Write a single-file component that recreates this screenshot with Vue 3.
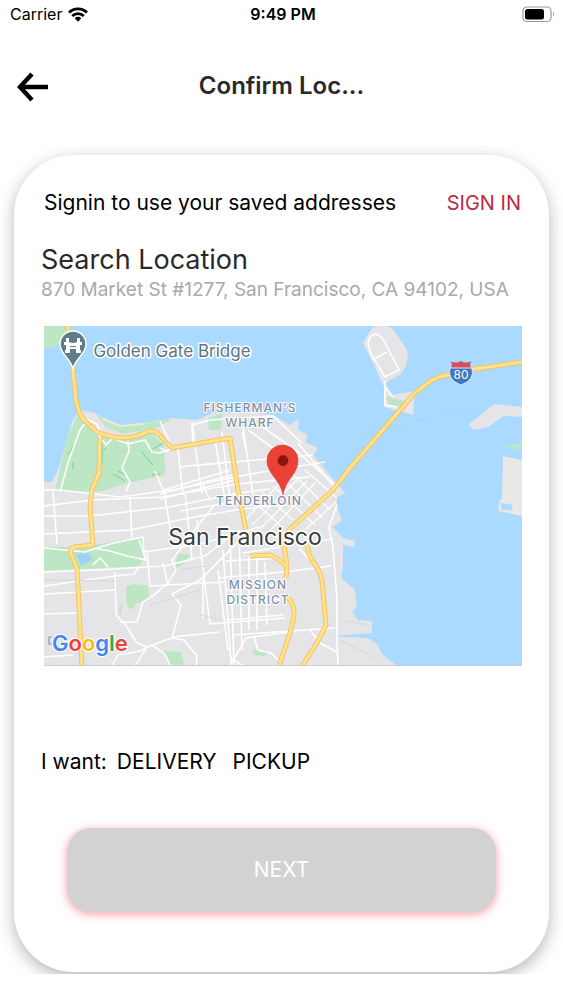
<template>
  <div class="screen">
    <div class="status-bar">
      <div class="carrier">
        <span>Carrier</span>
        <svg width="20" height="15" viewBox="0 0 20 15" aria-hidden="true">
          <g fill="none" stroke="#000" stroke-width="2.8">
            <path d="M1 5.6C6 .6 14 .6 19 5.6" />
            <path d="M4.2 9C7.6 5.7 12.4 5.7 15.8 9" />
          </g>
          <path d="M6.7 11.2C8.6 9.4 11.4 9.4 13.3 11.2L10 14.7Z" fill="#000" />
        </svg>
      </div>
      <span class="time">9:49 PM</span>
      <svg class="battery" width="34" height="17" viewBox="0 0 34 17" aria-hidden="true">
        <rect x="1" y="1" width="28" height="14.5" rx="4" fill="#fff" stroke="#999" stroke-width="1.2" />
        <rect x="3" y="3" width="19" height="10.5" rx="2.5" fill="#000" />
        <path d="M31 5.5Q33 8.2 31 11Z" fill="#999" />
      </svg>
    </div>

    <header class="header">
      <button class="back" type="button" aria-label="Back">
        <svg width="32" height="30" viewBox="0 0 32 30" aria-hidden="true">
          <path d="M15 2L3 15L15 28M3 15H31" fill="none" stroke="#000" stroke-width="4.4" />
        </svg>
      </button>
      <h1>Confirm Loc...</h1>
    </header>

    <main class="card-area">
      <section class="card">
        <div class="signin">
          <span>Signin to use your saved addresses</span>
          <button class="signin-btn" type="button">SIGN IN</button>
        </div>

        <h2>Search Location</h2>
        <p class="address">{{ address }}</p>

        <svg class="map" viewBox="44 326 478 340" role="img" aria-label="Map of San Francisco">
          <rect x="44" y="326" width="478" height="340" fill="#aadaff" />
          <!-- land -->
          <g fill="#e5e5e7">
            <path d="M44 482L52 482L59 467L66 442L73 420L79 410L95 413L120 426L150 422L173 418L197 420L210 414L223 413L250 412L273 415L290 425L299 419L298 430L308 435L305 442L318 448L313 455L325 469L337 483L345 493L337 497L337 507L342 520L333 527L343 538L355 541L354 547L343 545L343 567L341 578L355 590L357 607L352 612L358 620L372 621L372 633L330 636L367 638L376 643L384 656L397 666H44Z" />
            <path d="M363 343L372 328Q382 322 393 329L407 350Q410 363 400 375L385 383L392 395L415 391L413 415L384 407L384 387L373 363Z" />
            <path d="M469 424L494 404L522 407V417L504 416L488 427L473 430Z" />
            <path d="M503 456L522 460V516L499 511Q497 505 502 498Z" fill="#e8e8e6" />
          </g>
          <path d="M500 503L511 504L513 510L502 510Z" fill="#aadaff" />
          <!-- parks -->
          <g fill="#bde6c4">
            <path d="M44 326H68Q66 348 44 348Z" />
            <path d="M79 411L97 430L123 438L150 431L164 446L165 475L128 483L99 492L55 491L66 442Z" />
            <path d="M96 414L120 426L160 421L173 418L159 427L150 429L123 434L105 426Z" />
            <path d="M208 418L223 413L220 430L209 430Z" />
            <path d="M44 547H73L93 545L142 537L145 551L140 566L44 571Z" />
            <path d="M126 586L134 584L148 586L149 599L143 601L136 604L134 608L128 609L126 600Z" />
            <path d="M178 553L191 555L181 566L174 570Z" />
            <path d="M119 607L123 602L120 618Z" />
            <path d="M162 651L181 652L184 664L172 666Z" />
            <path d="M252 649L267 652L265 656L254 655Z" />
            <path d="M386 396L408 402L401 407L389 405Z" />
            <path d="M505 446L522 444V448L514 450Z" />
          </g>
          <g fill="none" stroke="#7fcaa0" stroke-width="1">
            <path d="M74 446L67 455M73 462V469M102 443V463M141 451L153 465M113 474L125 481M118 471L126 475M153 449L163 443M106 448L101 452M152 475L160 474" />
          </g>
          <path d="M76 554L89 553L92 560L81 565Z" fill="#9bd2f7" />
          <path d="M103 419L120 426L144 424" fill="none" stroke="#f0ead0" stroke-width="2" />
          <path d="M350 436L408 424L450 413L478 407" fill="none" stroke="#b6d3e6" stroke-width="1" />

          <!-- streets -->
          <g fill="none" stroke="#fff" stroke-width="1.6">
            <path d="M44 490L60 490L120 497L172 490L225 479L262 472L325 462" />
            <path d="M44 506L92 500L162 497L237 484L310 477" />
            <path d="M44 516L90 516L170 507L239 493L270 489" />
            <path d="M44 534L130 530L200 516L242 509L280 505" />
            <path d="M160 494L232 475M160 499L235 480M164 490L230 470M180 467L235 461M180 511L240 501" />
            <path d="M160 421L172 448L193 444L192 425L210 420L273 416L302 443" />
            <path d="M178 448L183 495M192 422L202 494M222 432L230 500M243 427L253 495M248 430L292 462M215 440L225 500" />
            <path d="M130 497L132 540M53 492L57 544M164 490L172 540M185 492L192 560M203 485L210 500M200 465L313 455" />
            <path d="M160 448L168 452M155 471L163 490M128 441L129 451L122 468L130 482L126 492M98 434L106 445L113 438L128 444L145 440L152 452L160 453L173 448" />
            <path d="M60 492L68 463L80 430L88 420L97 424L100 433" />
            <path d="M242 432L246 450M263 427L295 450L325 476M298 443L337 490" />
            <path d="M44 548L85 552L110 544L143 537L144 552L200 544L260 527" />
            <path d="M93 565L100 558L108 567M44 572L95 570L165 566L205 556L230 536" />
            <path d="M44 586L115 576L134 574L138 568M44 594L115 590M44 614L78 613" />
            <path d="M115 572L116 615L125 624L137 643M120 622H137L143 602L154 595L168 583L176 570L172 560L202 520L215 505" />
            <path d="M147 550L150 586L225 582M163 563L168 586M139 540L146 560L127 556L110 551L93 548" />
            <path d="M44 657L73 655M112 666L118 655L140 651L152 645L172 638L181 605L172 594L200 580L245 535" />
            <path d="M137 643L147 647L135 666M152 645L165 654L170 665M172 638L184 640L197 656L196 666M173 637L220 632" />
            <path d="M197 520L210 624L285 618M203 580V618M218 570L228 650M230 535L234 666M239 530L242 650M249 556V630M257 558V630M265 562L267 625" />
            <path d="M218 578L283 572L331 566M225 561L280 558M225 590L280 584M226 604L280 599M228 620L283 615M232 635L335 628M243 553L280 547" />
            <path d="M223 550L231 664L246 638L290 632M254 636L258 650L271 653L278 660M231 658L243 666" />
            <path d="M310 630L320 643L337 652M338 666L337 642L337 600L333 548L329 527L337 505" />
            <path d="M333 539L307 542M299 548L316 567" />
            <path d="M369 348Q366 337 375 334Q381 334 386 345L399 370L385 377L371 354ZM372 360L387 352M385 381V405L397 407M386 388L393 397" />
          </g>
          <g fill="none" stroke="#fff" stroke-width="1.2">
            <path d="M245 520L285 478M252 525L300 477M260 529L307 481M269 532L315 483M298 523L329 492M306 529L336 502M290 532L325 497" />
            <path d="M252 500L280 525M262 492L293 520M273 486L315 525M284 480L323 518M294 475L330 510M305 470L337 498M313 463L337 487" />
          </g>
          <g fill="none" stroke="#d6d7db" stroke-width="1">
            <path d="M44 580L115 581M150 605L200 590M180 570L205 566M200 615L222 620M340 640L378 660M345 621L370 625M314 455L335 482" />
          </g>

          <!-- highways -->
          <g v-for="layer in highwayLayers" :key="layer.stroke" fill="none" :stroke="layer.stroke" :stroke-width="layer.width" stroke-linejoin="round">
            <path v-for="road in highways" :key="road" :d="road" />
          </g>

          <!-- place labels -->
          <g class="label area">
            <text x="250" y="412">FISHERMAN'S</text>
            <text x="250" y="427">WHARF</text>
            <text x="259" y="505">TENDERLOIN</text>
            <text x="258" y="589">MISSION</text>
            <text x="258" y="604">DISTRICT</text>
          </g>
          <text class="label bridge" x="172" y="357">Golden Gate Bridge</text>
          <text class="label city" x="245" y="545">San Francisco</text>

          <!-- bridge pin -->
          <path d="M73 369C71 359 60 354 60 344A13 13 0 0 1 86 344C86 354 75 359 73 369Z" fill="#607d86" stroke="#fff" stroke-width="1.4" />
          <path d="M65 353V350H66V345H64V342H66V338H69V342Q73 344 77 342V338H80V342H82V345H80V350H81V353H76V349H70V353ZM70 346V347H76V346Z" fill="#fff" fill-rule="evenodd" />

          <!-- interstate shield -->
          <path d="M451 368Q453 363 450 361Q456 364 461 361Q466 364 472 361Q469 363 471 368Z" fill="#cf5260" />
          <path d="M450 368H472Q475 380 461 385Q447 380 450 368Z" fill="#3f76bf" stroke="#fff" stroke-width=".8" />
          <text class="shield" x="461" y="379">80</text>

          <!-- location marker -->
          <path d="M283 495C281 480 267 474 267 460.500A15.500 15.500 0 0 1 298 460.500C298 474 285 480 283 495Z" fill="#ea4335" stroke="#d23c31" stroke-width=".6" />
          <circle cx="283" cy="460.500" r="5.400" fill="#8b1410" />

          <path d="M52 637H49V644H52" fill="none" stroke="#8c95a3" stroke-width="1.2" />
          <text class="brand" x="52" y="651">
            <tspan v-for="(l, i) in brand" :key="i" :fill="l.color">{{ l.char }}</tspan>
          </text>
          <path d="M44 665.500H522" stroke="#c9ced4" stroke-width="1" />
        </svg>

        <div class="options">
          <span>I want:</span>
          <button v-for="o in options" :key="o" type="button" :aria-pressed="selected === o" @click="selected = o">{{ o }}</button>
        </div>

        <button class="next" type="button">NEXT</button>
      </section>
    </main>
  </div>
</template>

<script setup>
import { ref } from 'vue'

const address = '870 Market St #1277, San Francisco, CA 94102, USA'
const options = ['DELIVERY', 'PICKUP']
const selected = ref('')

const highways = [
  'M67 326L73 345V370L76 400Q78 413 84 420L97 432Q112 438 123 438Q137 437 150 431Q158 431 163 439L172 448L230 438L238 490L246 530',
  'M100 437L99 473L92 489L90 507L93 545L74 547Q69 549 71 554L77 568L82 666',
  'M522 362L475 369L438 377Q426 383 413 395L350 468L333 490L290 529L281 541',
  'M250 556L270 555Q282 560 285 566',
  'M283 540L287 565L286 578M287 597Q295 604 294 617L290 633L279 666',
  'M307 545Q309 558 316 566Q323 576 323 592L326 625L317 643L302 666',
]

const highwayLayers = [
  { stroke: '#f0c469', width: 5 },
  { stroke: '#ffe28a', width: 3 },
]

const brand = [
  { char: 'G', color: '#4285f4' },
  { char: 'o', color: '#ea4335' },
  { char: 'o', color: '#fbbc05' },
  { char: 'g', color: '#4285f4' },
  { char: 'l', color: '#34a853' },
  { char: 'e', color: '#ea4335' },
]
</script>

<style>
body { margin: 0; background: #fff; }
</style>

<style scoped>
.screen { font-family: Inter, "Liberation Sans", sans-serif; color: #000; background: #fff; padding-bottom: 24px; }
button { border: 0; padding: 0; background: none; font: inherit; color: inherit; cursor: pointer; }
h1, h2, p { margin: 0; }
svg { display: block; }

.status-bar { display: grid; grid-template-columns: 1fr auto 1fr; align-items: center; height: 28px; padding: 0 7px 0 10px; font-size: 16px; }
.carrier { display: flex; align-items: center; gap: 6px; }
.time { font-weight: 600; }
.battery { justify-self: end; }

.header { display: grid; grid-template-columns: 1fr auto 1fr; align-items: center; padding: 42px 17px 0; }
.back { justify-self: start; padding-top: 2px; }
h1 { font-size: 24px; line-height: 32px; font-weight: 600; color: #29292c; }

.card-area { overflow: hidden; padding: 53px 14px 2px; }
.card { display: flex; flex-direction: column; border-radius: 60px; padding: 34px 27px 60px; background: #fff; box-shadow: 0 5px 16px rgba(60, 50, 60, 0.36); }
.signin { display: flex; justify-content: space-between; padding: 0 1px 0 3px; font-size: 21px; line-height: 28px; }
.signin > span { font-size: 21px; }
.signin-btn { font-size: 20px; color: #bb2b45; }
h2 { margin-top: 25px; font-size: 27px; line-height: 36px; font-weight: 400; color: #29292c; }
.address { font-size: 19px; line-height: 24px; color: #a9a9ab; }
.map { align-self: stretch; margin: 24px 0 0 3px; }

.label { text-anchor: middle; paint-order: stroke; stroke: #fff; stroke-linejoin: round; }
.area { font-size: 12px; font-weight: 500; letter-spacing: 1px; fill: #8090a6; stroke-width: 2px; }
.bridge { font-size: 17px; fill: #5c7687; stroke-width: 3px; }
.city { font-size: 23px; fill: #3c3c40; stroke-width: 3px; }
.shield { font-size: 12px; fill: #fff; text-anchor: middle; }
.brand { font-size: 22px; font-weight: 600; paint-order: stroke; stroke: #fff; stroke-width: 2px; }

.options { display: flex; gap: 16px; margin-top: 82px; font-size: 21px; line-height: 28px; }
.options span { margin-right: -6px; }
.next { margin: 52px 26px 0; padding: 28px 0; border-radius: 24px; background: #d3d2d3; color: #fff; font-size: 21px; line-height: 28px; box-shadow: 0 2px 10px rgba(240, 60, 90, 0.5); }
</style>
